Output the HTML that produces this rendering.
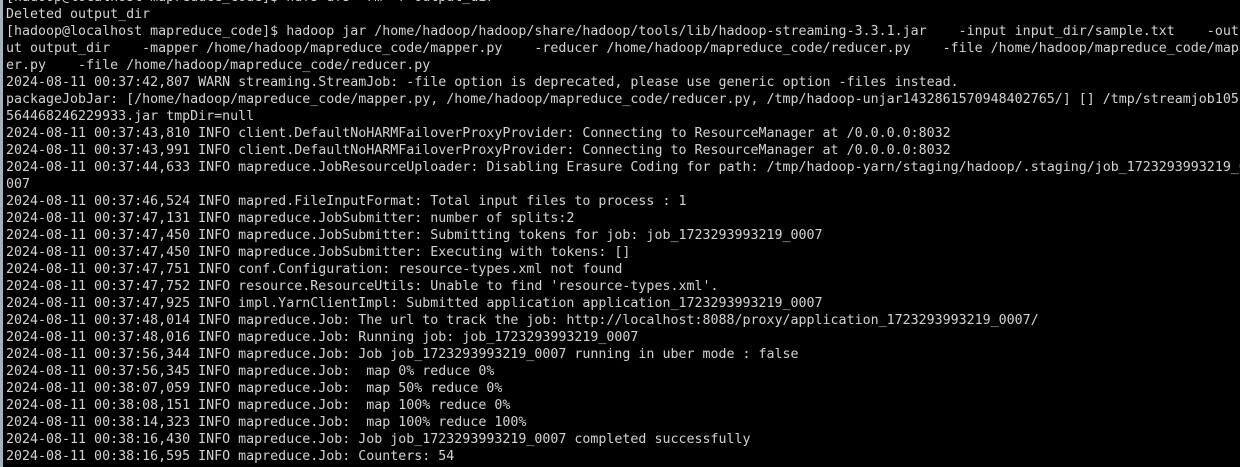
<!DOCTYPE html>
<html><head><meta charset="utf-8"><style>
html,body{margin:0;padding:0;background:#000;width:1240px;height:467px;overflow:hidden}
.wrap{position:relative;width:1240px;height:467px;overflow:hidden;background:#000}
.bar{position:absolute;left:0;top:0;width:3px;height:467px;background:#9fb3c4}
pre{position:absolute;left:6px;top:-11px;margin:0;font-family:"DejaVu Sans Mono","Liberation Mono",monospace;font-size:13.3px;line-height:17px;color:#d3d3d3;white-space:pre}
</style></head><body><div class="wrap"><div class="bar"></div><pre>[hadoop@localhost mapreduce_code]$ hdfs dfs -rm -r output_dir
Deleted output_dir
[hadoop@localhost mapreduce_code]$ hadoop jar /home/hadoop/hadoop/share/hadoop/tools/lib/hadoop-streaming-3.3.1.jar    -input input_dir/sample.txt    -outp
ut output_dir    -mapper /home/hadoop/mapreduce_code/mapper.py    -reducer /home/hadoop/mapreduce_code/reducer.py    -file /home/hadoop/mapreduce_code/mapp
er.py    -file /home/hadoop/mapreduce_code/reducer.py
2024-08-11 00:37:42,807 WARN streaming.StreamJob: -file option is deprecated, please use generic option -files instead.
packageJobJar: [/home/hadoop/mapreduce_code/mapper.py, /home/hadoop/mapreduce_code/reducer.py, /tmp/hadoop-unjar1432861570948402765/] [] /tmp/streamjob1051
564468246229933.jar tmpDir=null
2024-08-11 00:37:43,810 INFO client.DefaultNoHARMFailoverProxyProvider: Connecting to ResourceManager at /0.0.0.0:8032
2024-08-11 00:37:43,991 INFO client.DefaultNoHARMFailoverProxyProvider: Connecting to ResourceManager at /0.0.0.0:8032
2024-08-11 00:37:44,633 INFO mapreduce.JobResourceUploader: Disabling Erasure Coding for path: /tmp/hadoop-yarn/staging/hadoop/.staging/job_1723293993219_0
007
2024-08-11 00:37:46,524 INFO mapred.FileInputFormat: Total input files to process : 1
2024-08-11 00:37:47,131 INFO mapreduce.JobSubmitter: number of splits:2
2024-08-11 00:37:47,450 INFO mapreduce.JobSubmitter: Submitting tokens for job: job_1723293993219_0007
2024-08-11 00:37:47,450 INFO mapreduce.JobSubmitter: Executing with tokens: []
2024-08-11 00:37:47,751 INFO conf.Configuration: resource-types.xml not found
2024-08-11 00:37:47,752 INFO resource.ResourceUtils: Unable to find 'resource-types.xml'.
2024-08-11 00:37:47,925 INFO impl.YarnClientImpl: Submitted application application_1723293993219_0007
2024-08-11 00:37:48,014 INFO mapreduce.Job: The url to track the job: http://localhost:8088/proxy/application_1723293993219_0007/
2024-08-11 00:37:48,016 INFO mapreduce.Job: Running job: job_1723293993219_0007
2024-08-11 00:37:56,344 INFO mapreduce.Job: Job job_1723293993219_0007 running in uber mode : false
2024-08-11 00:37:56,345 INFO mapreduce.Job:  map 0% reduce 0%
2024-08-11 00:38:07,059 INFO mapreduce.Job:  map 50% reduce 0%
2024-08-11 00:38:08,151 INFO mapreduce.Job:  map 100% reduce 0%
2024-08-11 00:38:14,323 INFO mapreduce.Job:  map 100% reduce 100%
2024-08-11 00:38:16,430 INFO mapreduce.Job: Job job_1723293993219_0007 completed successfully
2024-08-11 00:38:16,595 INFO mapreduce.Job: Counters: 54
        File System Counters</pre></div></body></html>
